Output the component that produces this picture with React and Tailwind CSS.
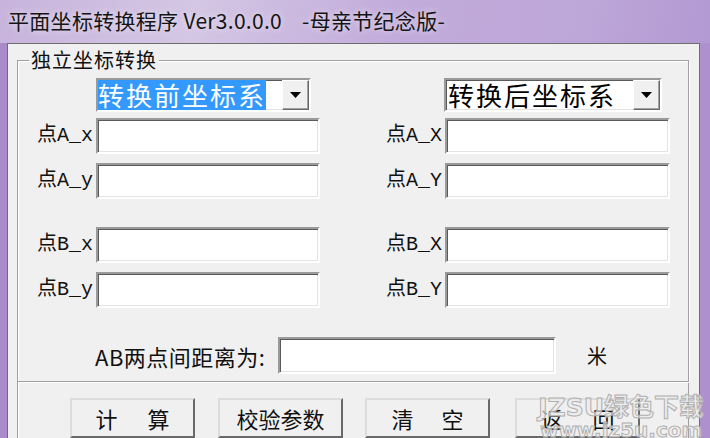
import React from 'react'

const sunken = 'border-2 border-t-[#9a9a9a] border-l-[#9a9a9a] border-b-white border-r-white shadow-[inset_1px_1px_0_#5a5a5a,inset_-1px_-1px_0_#e3e3e3] bg-white'
const label = 'text-right pr-[3px] text-[20px] text-[#111] leading-none'
const mono = { fontFamily: '"Liberation Mono","Noto Sans CJK SC",monospace' }
const cjk = { fontFamily: '"Noto Sans CJK SC","Noto Sans",sans-serif' }

function Combo({ text, selected, width }) {
  return (
    <div className={`${sunken} h-[34px] flex ${width}`}>
      <div className="flex-1 flex items-stretch">
        <span
          className={`h-full leading-[30px] text-[26px] tracking-[2px] ${selected ? 'bg-[#3399ff] text-white' : 'text-black pl-[2px]'}`}
          style={cjk}
        >
          {text}
        </span>
      </div>
      <div className="w-[27px] bg-[#f0f0f0] border border-t-white border-l-white border-b-[#696969] border-r-[#696969] shadow-[inset_-1px_-1px_0_#a0a0a0] flex items-center justify-center">
        <svg width="11" height="6" viewBox="0 0 11 6"><path d="M0 0h11L5.5 6z" fill="#000" /></svg>
      </div>
    </div>
  )
}

function Field({ name, width }) {
  return (
    <div className="flex items-center">
      <div className={`${label} ${width === 'r' ? 'w-[80px]' : 'w-[78px]'}`} style={mono}>{name}</div>
      <div className={`${sunken} h-[36px] ${width === 'r' ? 'w-[225px]' : 'w-[224px]'}`} />
    </div>
  )
}

function Pair({ l, r, mt }) {
  return (
    <div className={`flex ${mt}`}>
      <Field name={l} />
      <div className="w-[45px]" />
      <Field name={r} width="r" />
    </div>
  )
}

function Btn({ a, b, gap, ml }) {
  return (
    <div className={`${ml} w-[125px] h-[40px] bg-[#f0f0f0] border-2 border-t-[#dcdcdc] border-l-[#dcdcdc] border-b-[#696969] border-r-[#696969] flex justify-center pt-[7px] text-[22px] leading-none text-[#111] ${gap}`} style={cjk}>
      {b ? (<><span>{a}</span><span>{b}</span></>) : <span>{a}</span>}
    </div>
  )
}

export default function App() {
  return (
    <div className="relative w-[710px] h-[438px] overflow-hidden flex flex-col bg-[linear-gradient(100deg,#c7b3dc_0%,#d4c6e4_25%,#c2acdb_50%,#bda6d8_75%,#ad93cf_100%)]" style={cjk}>
      <div className="h-[43px] flex items-center pl-[8px] pb-[2px] text-[21px] tracking-[0.3px] text-[#151515] [text-shadow:0_0_6px_rgba(255,255,255,0.7)]">
        <span>平面坐标转换程序 Ver3.0.0.0</span>
        <span className="ml-[20px]">-母亲节纪念版-</span>
      </div>
      <div className="flex flex-1 min-h-0">
        <div className="w-[7px] bg-[#a98bc9]" />
        <div className="w-[693px] bg-[#f0f0f0] border-t border-l border-r border-[#6e6e6e] pl-[9px] pr-[10px] pt-[16px] flex flex-col">
          <div className="relative h-[335px] border border-[#a0a0a0] shadow-[inset_1px_1px_0_#fff,1px_1px_0_#fff] pt-[17px]">
            <span className="absolute left-[11px] top-[-14px] px-[2px] bg-[#f0f0f0] text-[20px] tracking-[1px] leading-[26px] text-[#111]">独立坐标转换</span>
            <div className="flex">
              <div className="w-[78px]" />
              <Combo text="转换前坐标系" selected width="w-[215px]" />
              <div className="w-[133px]" />
              <Combo text="转换后坐标系" width="w-[218px]" />
            </div>
            <Pair l="点A_x" r="点A_X" mt="mt-[6px]" />
            <Pair l="点A_y" r="点A_Y" mt="mt-[9px]" />
            <Pair l="点B_x" r="点B_X" mt="mt-[28px]" />
            <Pair l="点B_y" r="点B_Y" mt="mt-[9px]" />
            <div className="flex items-center mt-[29px] pl-[77px]">
              <div className="w-[183px] text-[22px] tracking-[0.5px] leading-none text-[#111]">AB两点间距离为:</div>
              <div className={`${sunken} h-[37px] w-[278px]`} />
              <div className="ml-[31px] text-[20px] text-[#111]">米</div>
            </div>
          </div>
          <div className="flex-1 border-l border-r border-[#a0a0a0] shadow-[inset_1px_0_0_#fff] flex items-start pt-[16px]">
            <Btn a="计" b="算" gap="gap-[30px]" ml="ml-[52px]" />
            <Btn a="校验参数" ml="ml-[23px]" />
            <Btn a="清" b="空" gap="gap-[28px]" ml="ml-[22px]" />
            <Btn a="返" b="回" gap="gap-[30px]" ml="ml-[25px]" />
          </div>
        </div>
        <div className="flex-1 bg-[#ad90cd]" />
      </div>
      <div className="absolute right-[6px] bottom-[-2px] flex flex-col items-center pointer-events-none" style={{ fontFamily: '"DejaVu Sans","Noto Sans CJK SC",sans-serif' }}>
        <span className="text-[25px] font-bold leading-none text-[#ececec]/70 [-webkit-text-stroke:1px_#b0b0b0]">JZSU绿色下载</span>
        <span className="text-[20px] font-bold leading-none text-[#ececec]/70 [-webkit-text-stroke:1px_#b0b0b0]">www.jz5u.com</span>
      </div>
    </div>
  )
}
